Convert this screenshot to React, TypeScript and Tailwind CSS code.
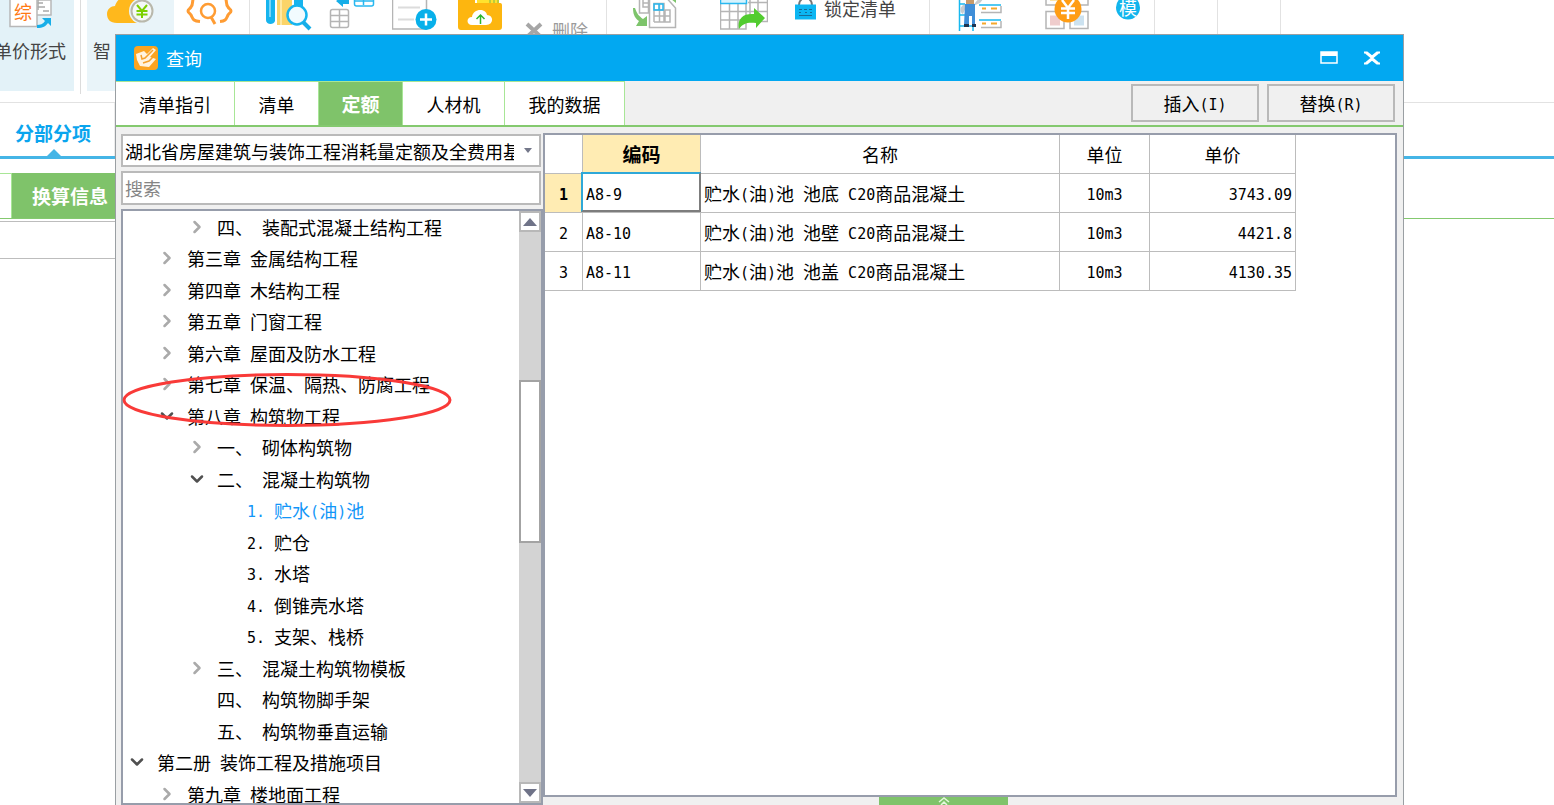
import { useState, type ReactNode } from 'react'
import { ChevronDown, ChevronRight } from 'lucide-react'
import clsx from 'clsx'

type TreeItem = {
  label: string
  level: 0 | 1 | 2 | 3
  state?: 'open' | 'closed'
}

const TREE: TreeItem[] = [
  { label: '四、 装配式混凝土结构工程', level: 2, state: 'closed' },
  { label: '第三章 金属结构工程', level: 1, state: 'closed' },
  { label: '第四章 木结构工程', level: 1, state: 'closed' },
  { label: '第五章 门窗工程', level: 1, state: 'closed' },
  { label: '第六章 屋面及防水工程', level: 1, state: 'closed' },
  { label: '第七章 保温、隔热、防腐工程', level: 1, state: 'closed' },
  { label: '第八章 构筑物工程', level: 1, state: 'open' },
  { label: '一、 砌体构筑物', level: 2, state: 'closed' },
  { label: '二、 混凝土构筑物', level: 2, state: 'open' },
  { label: '1. 贮水(油)池', level: 3 },
  { label: '2. 贮仓', level: 3 },
  { label: '3. 水塔', level: 3 },
  { label: '4. 倒锥壳水塔', level: 3 },
  { label: '5. 支架、栈桥', level: 3 },
  { label: '三、 混凝土构筑物模板', level: 2, state: 'closed' },
  { label: '四、 构筑物脚手架', level: 2 },
  { label: '五、 构筑物垂直运输', level: 2 },
  { label: '第二册 装饰工程及措施项目', level: 0, state: 'open' },
  { label: '第九章 楼地面工程', level: 1, state: 'closed' },
]

const INDENT = ['pl-1', 'pl-[34px]', 'pl-16', 'pl-[94px]']

const ROWS = [
  { code: 'A8-9', name: '贮水(油)池 池底 C20商品混凝土', unit: '10m3', price: '3743.09' },
  { code: 'A8-10', name: '贮水(油)池 池壁 C20商品混凝土', unit: '10m3', price: '4421.8' },
  { code: 'A8-11', name: '贮水(油)池 池盖 C20商品混凝土', unit: '10m3', price: '4130.35' },
]

const TABS = [
  { label: '清单指引', width: 'w-[119px]' },
  { label: '清单', width: 'w-[84px]' },
  { label: '定额', width: 'w-[84px]' },
  { label: '人材机', width: 'w-[102px]' },
  { label: '我的数据', width: 'w-[120px]' },
]

// Latin runs are half the width of a Chinese character
function Mixed({ text }: { text: string }) {
  return (
    <span className="whitespace-pre">
      {text.split(/([\x20-\x7e]+)/).map((part, i) =>
        i % 2 ? (
          <span key={i} className="align-[1px] font-['DejaVu_Sans_Mono','Noto_Sans_CJK_SC',monospace] text-[15px] leading-none">
            {part}
          </span>
        ) : (
          part
        ),
      )}
    </span>
  )
}

function Art({ box, className, children }: { box: string; className: string; children: ReactNode }) {
  return (
    <svg viewBox={box} className={clsx('shrink-0', className)} fill="none" aria-hidden="true">
      {children}
    </svg>
  )
}

function PriceFormIcon() {
  return (
    <Art box="0 0 44 34" className="h-[34px] w-11">
      <path d="M20 0H42V15H28" fill="#fff" stroke="#b8b8b8" strokeWidth="1.5" />
      <path d="M22 3h12M22 7h14M29 0v10M34 11h6" stroke="#a9a9a9" strokeWidth="1.5" />
      <path d="M1 0V26.500H28V0" fill="#fff" stroke="#b8b8b8" strokeWidth="1.5" />
      <text x="5" y="19" fontSize="18" fill="#ff7a14" fontFamily="Noto Sans CJK SC, sans-serif">
        综
      </text>
      <path d="M28 28c6 0 9-2 11-5l3 3V18H33l3 3c-2 3-5 4-8 4z" fill="#18aee8" />
    </Art>
  )
}

function CloudCoinIcon() {
  return (
    <Art box="107 0 48 34" className="h-[34px] w-12">
      <path d="M117 23c-7 0-10-4-10-9s4-8 8-8c1-4 4-7 6-8h18v25z" fill="#ffb81c" />
      <circle cx="142" cy="11" r="13" fill="#e9f4f9" />
      <circle cx="142" cy="11" r="10.500" fill="#f4f8f7" stroke="#b9b8ac" strokeWidth="2" />
      <path d="M137 5l5 6 5-6M136.500 11h11M136.500 14.500h11M142 11v7" stroke="#7bd000" strokeWidth="2" />
    </Art>
  )
}

function ScopeIcon() {
  return (
    <Art box="186 0 47 34" className="h-[34px] w-[47px]">
      <path
        d="M195-3c-4 2-1 7-4 10-1 2-3 2-3 4s2 2 3 4c2 4 2 6 9 6.500M224-3c4 2 1 7 4 10 1 2 3 2 3 4s-2 2-3 4c-2 4-2 6-8 6.500"
        stroke="#ff9c33"
        strokeWidth="3"
      />
      <circle cx="208" cy="11" r="7" stroke="#ff9c33" strokeWidth="2.500" />
      <path d="M211 17l4 7" stroke="#ff9c33" strokeWidth="3" />
    </Art>
  )
}

function BooksIcon() {
  return (
    <Art box="265 0 47 34" className="h-[34px] w-[47px]">
      <path d="M266-1v21c0 5 8 5 9 1V-1z" fill="#16b4ee" />
      <path d="M270 0v17" stroke="#9be1fb" strokeWidth="1.500" />
      <path d="M277-1h15v26h-15z" fill="#fbd468" />
      <path d="M281 0v25" stroke="#fff0b8" strokeWidth="1.500" />
      <path d="M294-1h9v10h-9z" fill="#16b4ee" />
      <circle cx="297" cy="15" r="9.500" fill="#f2fbfe" stroke="#16b4ee" strokeWidth="2.500" />
      <path d="M303 22l7 7" stroke="#16aee8" strokeWidth="4" />
    </Art>
  )
}

function GridMoveIcon() {
  return (
    <Art box="329 0 46 34" className="h-[34px] w-[46px]">
      <rect x="330.500" y="9.500" width="18" height="18" rx="2" stroke="#b5b5b5" strokeWidth="1.500" />
      <path d="M331 15.500h18M331 21.500h18M339.500 10v18" stroke="#b5b5b5" strokeWidth="1.500" />
      <path d="M336 1l7-5v3h6v5h-6v3z" fill="#16aee8" />
      <path d="M354.500-1v5c0 2 2 2 2 2h15c2 0 2-2 2-2v-5M363.500 0v5M355 1h18" stroke="#28b8f0" strokeWidth="1.500" />
    </Art>
  )
}

function DocAddIcon() {
  return (
    <Art box="392 0 48 34" className="h-[34px] w-12">
      <path d="M392.500 0v29h34V0" stroke="#b5b5b5" strokeWidth="1.500" />
      <path d="M398 7.500h22M398 19.500h16" stroke="#dcdcdc" strokeWidth="2" />
      <circle cx="426" cy="19.500" r="10.500" fill="#08b0ea" />
      <path d="M420 19.500h12M426 13.500v12" stroke="#fff" strokeWidth="2.500" />
    </Art>
  )
}

function FolderIcon() {
  return (
    <Art box="457 0 46 34" className="h-[34px] w-[46px]">
      <path d="M477-1h22v10h-22z" fill="#ffe22e" />
      <path d="M490 0v3M494 0v3M498 0v3" stroke="#7ab648" strokeWidth="1" />
      <path d="M458-1h17v4h25c2 0 2 2 2 2v22c0 2-1 3-3 3h-38c-2 0-3-1-3-3z" fill="#fdb60f" />
      <path d="M472 25c-6 0-6-8 0-8 1-9 14-9 15-2 7 0 7 10-1 10z" fill="#fff" />
      <path d="M480.500 24v-8M476.500 19l4-4 4 4" stroke="#2db52d" strokeWidth="1.500" />
    </Art>
  )
}

function ConvertIcon() {
  return (
    <Art box="632 0 46 34" className="h-[34px] w-[46px]">
      <path d="M639.500 0v13h9V0M643 0v7h5M643 3h5" stroke="#b5b5b5" strokeWidth="1.500" />
      <path d="M633 8c0 8 3 11 6 13l-3 5h11V16l-4 3c-4-3-6-5-8-11z" fill="#7dc46b" />
      <path d="M649.500-1v28.500h26V8l-8-9z" fill="#fff" stroke="#b5b5b5" strokeWidth="1.500" />
      <path d="M654 3.500h10v18.500h6V10h-16zM654 16h16M654 22h16M654 10v12M659.500 3v19M665 10v12" stroke="#b5b5b5" strokeWidth="1.500" />
      <path d="M654 4h9v6h-9zM659 4v6" stroke="#28b8f0" strokeWidth="1.500" />
      <path d="M671-1h5v4z" fill="#7dc46b" />
    </Art>
  )
}

function GridExportIcon() {
  return (
    <Art box="720 0 48 34" className="h-[34px] w-12">
      <path
        d="M720.500 3v26h25.500V3M720.500 11.500h46.500M720.500 20h26M729.500 3v26M738 3v26M750 0v22M758 0v12M767.500-1v22.500h-12M748 2.500h19"
        stroke="#b5b5b5"
        strokeWidth="1.500"
      />
      <path d="M720.500-2h26v5.500h-26z" fill="#d6f3fd" stroke="#28b8f0" strokeWidth="1.500" />
      <path d="M739 29c-2-9 3-16 15-15V8l11 10-9 10v-5c-8-1-13 0-17 6z" fill="#52cc30" />
    </Art>
  )
}

function LockIcon() {
  return (
    <Art box="795 0 21 20" className="h-5 w-[21px]">
      <path d="M799 5c0-9 13-9 13 0" stroke="#777" strokeWidth="2" />
      <path d="M795 4.500h21V19.500h-21z" fill="#0cb6f2" />
      <path d="M799 9.500h3M804 9.500h3M809 9.500h3M799 12.500h2M805 12.500h2M810 12.500h2M799 15.500h13" stroke="#176d98" strokeWidth="1.200" />
    </Art>
  )
}

function WorkerIcon() {
  return (
    <Art box="957 0 46 34" className="h-[34px] w-[46px]">
      <path d="M959.500 0v31M973 20v11M959 4h6M959 15h6M959 26h14" stroke="#18b8ef" strokeWidth="1.500" />
      <path d="M966 0h8v4h-8z" fill="#c69a6c" />
      <path d="M963 5c-4 4-3 7 0 9l4-9zM973 6l7-3 4-5-4-1-5 6z" fill="#c9ccd0" />
      <path d="M965 4h10v21h-3v-9h-3v9h-5z" fill="#3f8ed8" />
      <path d="M964 24h5v3h-5zM972 24h4v3h-4z" fill="#1f3450" />
      <path d="M979 5h22M979 20h22" stroke="#18b8ef" strokeWidth="1.500" />
      <path d="M981 12.500h20V6M981 27.500h20V21" stroke="#b5b5b5" strokeWidth="1.500" />
      <path d="M982 8.500h4M991 8.500h6M982 23.500h4M991 23.500h6" stroke="#f5a82c" strokeWidth="2" />
    </Art>
  )
}

function CostIcon() {
  return (
    <Art box="1045 0 46 34" className="h-[34px] w-[46px]">
      <path d="M1046-1v6h18v-6M1070-1v6h18v-6M1046 11.500h18v17h-18zM1070 11.500h18v17h-18z" stroke="#b5b5b5" strokeWidth="1.500" />
      <path d="M1050 0h9v1h-9z" fill="#fbe5a6" />
      <path d="M1050 15.500h10v10h-10z" fill="#efcccc" />
      <path d="M1074 15.500h10v10h-10z" fill="#cce2f0" />
      <circle cx="1068" cy="9" r="13.500" fill="#ff9d14" />
      <path d="M1062 0l6 8 6-8M1061 8.500h14M1061 13h14M1068 8v11" stroke="#fff" strokeWidth="2.500" />
    </Art>
  )
}

function TemplateIcon() {
  return (
    <Art box="1116 0 24 22" className="h-[22px] w-6">
      <circle cx="1128" cy="7.500" r="12" fill="#12b5ed" />
      <text x="1119" y="15" fontSize="18" fill="#fff" fontFamily="Noto Sans CJK SC, sans-serif">
        模
      </text>
    </Art>
  )
}

function Ribbon() {
  return (
    <div className="flex h-[103px] items-start overflow-hidden border-b border-[#e2e2e2] text-[#444]">
      <div className="flex h-[94px] w-[81px] shrink-0 items-start border-r border-[#dcdcdc]">
        <button type="button" className="flex h-[91px] w-[74px] flex-col bg-[#e3f2f8] text-left">
          <span className="pl-[9px]">
            <PriceFormIcon />
          </span>
          <span className="-ml-1.5 whitespace-nowrap leading-8">单价形式</span>
        </button>
      </div>
      <div className="flex h-[94px] w-[169px] shrink-0 items-start border-r border-[#e2e2e2] pl-1.5">
        <button type="button" className="flex h-[91px] w-[87px] flex-col bg-[#e9f4f9] text-left">
          <span className="pl-5">
            <CloudCoinIcon />
          </span>
          <span className="pl-1.5 leading-8">智</span>
        </button>
        <button type="button" className="pl-3" aria-label="查询">
          <ScopeIcon />
        </button>
      </div>
      <div className="flex h-[94px] w-[357px] shrink-0 items-start gap-[17px] border-r border-[#e2e2e2] pl-[15px]">
        <BooksIcon />
        <GridMoveIcon />
        <DocAddIcon />
        <FolderIcon />
        <button type="button" className="flex items-start gap-2 pl-1 pt-4 text-[#9b9b9b]">
          <svg viewBox="0 0 20 20" className="mt-1 h-5 w-5" aria-hidden="true">
            <path d="M3 4l14 13M17 4L3 17" stroke="#a6a6a6" strokeWidth="4" />
          </svg>
          <span className="leading-7">删除</span>
        </button>
      </div>
      <div className="flex h-[94px] w-[323px] shrink-0 items-start border-r border-[#e2e2e2] pl-[25px]">
        <ConvertIcon />
        <span className="pl-[42px]">
          <GridExportIcon />
        </span>
        <button type="button" className="flex items-start gap-2 pl-[27px]">
          <LockIcon />
          <span className="leading-4">锁定清单</span>
        </button>
      </div>
      <div className="flex h-[94px] w-[225px] shrink-0 items-start border-r border-[#e2e2e2] pl-[27px]">
        <WorkerIcon />
        <span className="pl-[42px]">
          <CostIcon />
        </span>
        <span className="pl-[25px]">
          <TemplateIcon />
        </span>
      </div>
      <div className="h-[94px] w-[63px] shrink-0 border-r border-[#e2e2e2]" />
      <div className="h-[94px] w-[63px] shrink-0 border-r border-[#e2e2e2]" />
    </div>
  )
}

function Workspace() {
  return (
    <>
      <div className="flex h-14 border-b-[3px] border-[#45b5e6]">
        <a
          href="#sections"
          className="flex w-[115px] flex-col justify-end border-r border-[#ececec] pl-[15px] text-[19px] font-bold text-[#0aa5ee]"
        >
          <span className="leading-8">分部分项</span>
          <svg viewBox="0 0 14 7" className="ml-8 h-[7px] w-3.5" aria-hidden="true">
            <path d="M0 7L7 0l7 7z" fill="#45b5e6" />
          </svg>
        </a>
      </div>
      <div className="mt-3.5 flex h-[46px] border-b border-[#84c96f]">
        <div className="w-3 border-r border-t border-[#a8e696]" />
        <button type="button" className="w-32 bg-[#7fc36a] pl-5 text-left text-[19px] font-bold text-white">
          换算信息
        </button>
      </div>
      <div className="mt-0.5 h-[38px] w-[115px] border-y border-[#bdbdbd]" />
    </>
  )
}

function TitleBar() {
  return (
    <div className="flex h-[46px] shrink-0 items-center bg-[#02a8f1] pl-[18px] pr-[22px] text-white">
      <svg viewBox="0 0 24 24" className="h-6 w-6" aria-hidden="true">
        <rect width="24" height="24" rx="4" fill="#fba421" />
        <path d="M2 8l8-3 3 3 6-6 3 2-6 7 6 2-7 8-9-1-3-6z" fill="#fff3df" />
        <path d="M7 9l1 4 3-1 8-8M9 17l6-2 4-4" stroke="#f6a12c" strokeWidth="1.500" fill="none" />
      </svg>
      <h1 className="grow pl-2">查询</h1>
      <button type="button" aria-label="最大化" className="mr-[25px]">
        <svg viewBox="0 0 18 14" className="h-3.5 w-[18px]">
          <path d="M1 1h16v11H1z" fill="none" stroke="#fff" strokeWidth="1.500" />
          <path d="M1 1h16v4H1z" fill="#fff" />
        </svg>
      </button>
      <button type="button" aria-label="关闭">
        <svg viewBox="0 0 18 14" className="h-3.5 w-[18px]">
          <path d="M1 1.500h3l5 4 5-4h3M1 12.500h3l5-4 5 4h3M3 2l12 10M15 2L3 12" fill="none" stroke="#fff" strokeWidth="2" />
        </svg>
      </button>
    </div>
  )
}

function CatalogPane() {
  const [selected, setSelected] = useState('1. 贮水(油)池')

  return (
    <div className="flex w-[420px] shrink-0 flex-col">
      <div className="relative mt-px h-[33px] shrink-0">
        <select
          aria-label="定额库"
          className="h-full w-full appearance-none border-2 border-[#bababa] bg-white pl-0.5 pr-[25px]"
        >
          <option>湖北省房屋建筑与装饰工程消耗量定额及全费用基</option>
        </select>
        <svg viewBox="0 0 10 6" className="pointer-events-none absolute right-2 top-3.5 h-1.5 w-2.5" aria-hidden="true">
          <path d="M1 0h8L5 5z" fill="#74788a" />
        </svg>
      </div>
      <input
        type="text"
        aria-label="搜索"
        placeholder="搜索"
        className="mt-1 h-[34px] w-full shrink-0 border-2 border-[#bababa] bg-white px-0.5 placeholder:text-[#858585]"
      />
      <div className="-mr-0.5 mt-1 flex min-h-0 grow border-2 border-[#979dab] bg-white">
        <ul className="min-w-0 grow overflow-hidden">
          {TREE.map((item) => (
            <li key={item.label} className="odd:h-[31px] even:h-8">
              <button
                type="button"
                onClick={() => setSelected(item.label)}
                className={clsx(
                  'flex h-full w-full items-center gap-2.5 text-left',
                  INDENT[item.level],
                  item.label === selected && 'text-[#1296f8]',
                )}
              >
                <span className="flex w-5 justify-center">
                  {item.state === 'open' && <ChevronDown className="h-5 w-5 text-[#505050]" strokeWidth={3} />}
                  {item.state === 'closed' && <ChevronRight className="h-5 w-5 text-[#aaa]" strokeWidth={3} />}
                </span>
                <Mixed text={item.label} />
              </button>
            </li>
          ))}
        </ul>
        <div className="flex w-[22px] shrink-0 flex-col bg-[#d3d3d3]">
          <button type="button" aria-label="向上" className="flex h-[21px] items-center justify-center border-2 border-[#b8b8b8] bg-white">
            <svg viewBox="0 0 14 8" className="h-2 w-3.5">
              <path d="M0 8L7 0l7 8z" fill="#6f7388" />
            </svg>
          </button>
          <div className="grow-[150] basis-0" />
          <div className="grow-[160] basis-0 border-2 border-[#a3a3a3] bg-white" />
          <div className="grow-[242] basis-0" />
          <button type="button" aria-label="向下" className="flex h-[21px] items-center justify-center border-2 border-[#b8b8b8] bg-white">
            <svg viewBox="0 0 14 8" className="h-2 w-3.5">
              <path d="M0 0h14L7 8z" fill="#6f7388" />
            </svg>
          </button>
        </div>
      </div>
    </div>
  )
}

function QuotaTable() {
  const cell = 'border-b border-r border-[#bcbcbc]'

  return (
    <table className="table-fixed border-separate border-spacing-0">
      <colgroup>
        <col className="w-[38px]" />
        <col className="w-[118px]" />
        <col className="w-[359px]" />
        <col className="w-[90px]" />
        <col className="w-[146px]" />
      </colgroup>
      <thead>
        <tr className="h-[39px]">
          <td className={cell} />
          <th className={clsx(cell, 'bg-[#ffecb3] text-[19px] font-bold')}>编码</th>
          <th className={clsx(cell, 'font-normal')}>名称</th>
          <th className={clsx(cell, 'font-normal')}>单位</th>
          <th className={clsx(cell, 'font-normal')}>单价</th>
        </tr>
      </thead>
      <tbody>
        {ROWS.map((row, i) => (
          <tr key={row.code} className="h-[39px]">
            <th className={clsx(cell, i === 0 ? 'bg-[#ffecb3] font-bold' : 'font-normal')}>
              <Mixed text={String(i + 1)} />
            </th>
            <td className={clsx(cell, 'relative pl-[3px]')}>
              <Mixed text={row.code} />
              {i === 0 && (
                <span className="pointer-events-none absolute -left-0.5 -right-px -top-0.5 bottom-0 border-2 border-b-[#7d7d7d] border-l-[#2fa8d8] border-r-[#7d7d7d] border-t-[#2fa8d8]" />
              )}
            </td>
            <td className={clsx(cell, 'pl-[3px]')}>
              <Mixed text={row.name} />
            </td>
            <td className={clsx(cell, 'text-center')}>
              <Mixed text={row.unit} />
            </td>
            <td className={clsx(cell, 'pr-[3px] text-right')}>
              <Mixed text={row.price} />
            </td>
          </tr>
        ))}
      </tbody>
    </table>
  )
}

function QueryWindow() {
  const [tab, setTab] = useState('定额')

  return (
    <section className="absolute bottom-0 left-[115px] right-[150px] top-[34px] flex flex-col border border-b-0 border-[#9a9fa3] bg-[#f0f0f0] text-black">
      <TitleBar />
      <div className="flex h-[46px] shrink-0 items-stretch border-b-2 border-[#84c96f]">
        <nav className="flex">
          {TABS.map(({ label, width }) => (
            <button
              key={label}
              type="button"
              onClick={() => setTab(label)}
              className={clsx(
                'border-r border-t border-[#a8e696]',
                width,
                tab === label ? 'bg-[#7fc36a] text-[19px] font-bold text-white' : 'bg-white',
              )}
            >
              {label}
            </button>
          ))}
        </nav>
        <div className="flex grow items-center justify-end gap-2 pr-2">
          <button type="button" className="h-[38px] w-32 border-2 border-[#b9b9b9]">
            <Mixed text="插入(I)" />
          </button>
          <button type="button" className="h-[38px] w-32 border-2 border-[#b9b9b9]">
            <Mixed text="替换(R)" />
          </button>
        </div>
      </div>
      <div className="flex min-h-0 grow gap-0.5 pl-[5px] pr-1.5 pt-1.5">
        <CatalogPane />
        <div className="flex min-w-0 grow flex-col">
          <div className="min-h-0 grow overflow-hidden border-2 border-[#979dab] bg-white">
            <QuotaTable />
          </div>
          <button type="button" aria-label="展开" className="ml-[336px] flex h-2 w-[129px] items-start justify-center overflow-hidden bg-[#7fc36a]">
            <svg viewBox="0 0 12 8" className="h-2 w-3 shrink-0">
              <path d="M1 5l5-4 5 4M3 8l3-3 3 3" fill="none" stroke="#e4f8dc" strokeWidth="1.500" />
            </svg>
          </button>
        </div>
      </div>
    </section>
  )
}

export default function App() {
  return (
    <main className="relative h-screen overflow-hidden bg-white font-['Noto_Sans_CJK_SC',sans-serif] text-lg">
      <Ribbon />
      <Workspace />
      <QueryWindow />
      {/* Hand-drawn marker around chapter eight */}
      <svg viewBox="0 0 330 56" className="pointer-events-none absolute left-[122px] top-[372px] h-14 w-[330px]" aria-hidden="true">
        <ellipse cx="165" cy="28" rx="163" ry="25.500" fill="none" stroke="#f93a38" strokeWidth="3" />
      </svg>
    </main>
  )
}
